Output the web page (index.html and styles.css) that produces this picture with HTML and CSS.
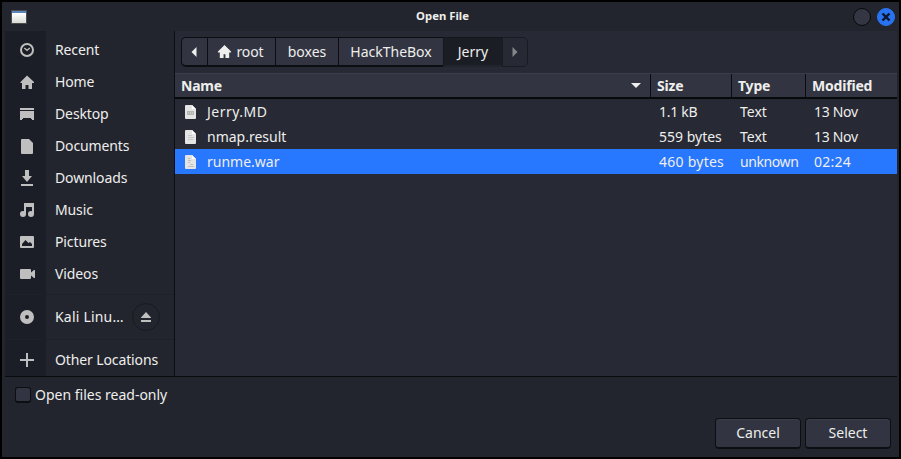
FILE: index.html
```html
<!DOCTYPE html>
<html lang="en">
<head>
<meta charset="utf-8">
<title>Open File</title>
<link rel="stylesheet" href="styles.css">
</head>
<body>
<div class="window">
  <header class="titlebar">
    <span class="app-icon"></span>
    <h1>Open File</h1>
    <div class="controls">
      <span class="ctl"></span>
      <span class="ctl close"><svg width="10" height="10" viewBox="0 0 10 10"><path d="M1.5 1.5l7 7M8.5 1.5l-7 7" stroke="#0d1526" stroke-width="2.4"/></svg></span>
    </div>
  </header>
  <main class="content">
    <nav class="sidebar">
      <ul class="places">
        <li><svg class="ic" viewBox="0 0 16 16"><circle cx="8" cy="8" r="6" fill="none" stroke="currentColor" stroke-width="2"/><path d="M5.3 6L8 8.3 10.8 6" fill="none" stroke="currentColor" stroke-width="1.3"/></svg><span class="label">Recent</span></li>
        <li><svg class="ic" viewBox="0 0 16 16"><path d="M8 1.5L1.5 8v1H3v6h3.5v-4h3v4H13V9h2V8z" fill="currentColor"/></svg><span class="label">Home</span></li>
        <li><svg class="ic" viewBox="0 0 16 16"><path d="M1 2h14v2H1zM1 5h14v9h-2v-1h-1v-1H4v1H3v1H1z" fill="currentColor"/></svg><span class="label">Desktop</span></li>
        <li><svg class="ic" viewBox="0 0 16 16"><path d="M3 1h7l4 4v10q0 1-1 1H3q-1 0-1-1V2q0-1 1-1z" fill="currentColor"/></svg><span class="label">Documents</span></li>
        <li><svg class="ic" viewBox="0 0 16 16"><path d="M6 0h4v6h3l-5 6-5-6h3zM2 14h12v2H2z" fill="currentColor"/></svg><span class="label">Downloads</span></li>
        <li><svg class="ic" viewBox="0 0 16 16"><path d="M5 1h10v11h-2V5H7v7H5z" fill="currentColor"/><circle cx="4" cy="12" r="3" fill="currentColor"/><circle cx="12" cy="12" r="3" fill="currentColor"/></svg><span class="label">Music</span></li>
        <li><svg class="ic" viewBox="0 0 16 16"><path fill-rule="evenodd" d="M2 2h12q1 0 1 1v10q0 1-1 1H2q-1 0-1-1V3q0-1 1-1zM3 12h10V10L11 8 9.5 9 6.5 6 3 10z" fill="currentColor"/></svg><span class="label">Pictures</span></li>
        <li><svg class="ic" viewBox="0 0 16 16"><path d="M2 3h9q1 0 1 1v2.5L15 4h1v8h-1l-3-2.5V12q0 1-1 1H2q-1 0-1-1V4q0-1 1-1z" fill="currentColor"/></svg><span class="label">Videos</span></li>
        <li class="device"><svg class="ic" viewBox="0 0 16 16"><circle cx="8" cy="8" r="4.5" fill="none" stroke="currentColor" stroke-width="5"/></svg><span class="label clip">Kali Linu…</span><span class="eject"><svg width="10" height="10" viewBox="0 0 10 10"><path d="M5 0l5 5.5v.5H0v-.5zM0 8h10v2H0z" fill="currentColor"/></svg></span></li>
        <li class="other"><svg class="ic" viewBox="0 0 16 16"><path d="M7 1h2v6h6v2H9v6H7V9H1V7h6z" fill="currentColor"/></svg><span class="label">Other Locations</span></li>
      </ul>
    </nav>
    <section class="browser">
      <div class="pathbar">
        <span class="crumb back"><svg width="6" height="10" viewBox="0 0 6 10"><path d="M5.5 0v10L.5 5z" fill="currentColor"/></svg></span>
        <span class="crumb root"><svg class="home" width="15" height="15" viewBox="0 0 16 16"><path d="M8 1L1 8v1h2v6h4v-4h2v4h4V9h2V8z" fill="currentColor"/></svg><span>root</span></span>
        <span class="crumb boxes">boxes</span>
        <span class="crumb htb">HackTheBox</span>
        <span class="crumb current">Jerry</span>
        <span class="crumb forward"><svg width="6" height="10" viewBox="0 0 6 10"><path d="M.5 0v10l5-5z" fill="currentColor"/></svg></span>
      </div>
      <div class="row head">
        <span class="name">Name<svg width="10" height="5" viewBox="0 0 10 5"><path d="M0 0h10L5 5z" fill="currentColor"/></svg></span><span>Size</span><span>Type</span><span>Modified</span>
      </div>
      <div class="row">
        <span class="name"><svg width="11" height="14" viewBox="0 0 11 14"><path d="M1 0h6l4 4v9q0 1-1 1H1q-1 0-1-1V1q0-1 1-1z" fill="#e4e4e4"/><path d="M7 0v4h4z" fill="#fff"/><path d="M2 6h7v4H2z" fill="#b4b4b4"/><path d="M3 8h5" stroke="#ddd" stroke-dasharray="1 1"/></svg><span class="wide">Jerry.MD</span></span><span class="tight">1.1 kB</span><span>Text</span><span class="tight">13 Nov</span>
      </div>
      <div class="row">
        <span class="name"><svg width="11" height="14" viewBox="0 0 11 14"><path d="M1 0h6l4 4v9q0 1-1 1H1q-1 0-1-1V1q0-1 1-1z" fill="#e4e4e4"/><path d="M7 0v4h4z" fill="#fff"/><path d="M3 5.5h4M3 7.5h6M3 9.5h5" stroke="#c8c8c8"/></svg>nmap.result</span><span>559 bytes</span><span>Text</span><span class="tight">13 Nov</span>
      </div>
      <div class="row selected">
        <span class="name"><svg width="11" height="14" viewBox="0 0 11 14"><path d="M1 0h6l4 4v9q0 1-1 1H1q-1 0-1-1V1q0-1 1-1z" fill="#e4e4e4"/><path d="M7 0v4h4z" fill="#fff"/><path d="M3 3.5h2M3 5.5h3M3 7.5h2M5 9.5h3M3 11.5h6" stroke="#c0c0c0"/></svg>runme.war</span><span class="loose">460 bytes</span><span class="unknown">unknown</span><span class="loose">02:24</span>
      </div>
    </section>
  </main>
  <footer class="footer">
    <label class="readonly"><span class="box"></span><span>Open files read-only</span></label>
    <div class="actions"><button>Cancel</button><button>Select</button></div>
  </footer>
</div>
</body>
</html>
```
FILE: styles.css
```css
* { box-sizing: border-box; }
body {
  margin: 0;
  background: #000;
  color: #eeeeec;
  font: 14px/20px "Noto Sans", sans-serif;
}
.window {
  width: 901px;
  height: 459px;
  border: 2px solid #000;
  padding: 0 2px 0 3px;
  background: #23252e;
  display: flex;
  flex-direction: column;
}
.titlebar {
  height: 29px;
  flex: none;
  display: grid;
  grid-template-columns: 60px 1fr 60px;
  align-items: center;
}
.app-icon {
  width: 14px;
  height: 12px;
  margin-left: 7px;
  border-top: 2px solid #5b86bd;
  background: linear-gradient(#fff, #d9dcd6);
  box-shadow: 0 0 0 1px #4a4b4a;
}
.titlebar h1 {
  margin: 0;
  padding: 0 17px 2px 0;
  font-size: 11.3px;
  font-weight: 700;
  text-align: center;
}
.controls { display: flex; gap: 6px; justify-content: flex-end; padding-right: 2px; }
.ctl {
  width: 18px;
  height: 18px;
  border: 1px solid #07080a;
  border-radius: 50%;
  background: #343743;
  display: grid;
  place-items: center;
}
.ctl.close { border-color: #2a74ee; background: #2773f1; }
.content { height: 346px; flex: none; display: flex; border-bottom: 1px solid #0a0b0e; }
.sidebar {
  width: 170px;
  border-right: 1px solid #0c0d11;
  background: linear-gradient(90deg, #1b1e26 41px, #23252e 41px);
}
.places { margin: 0; padding: 3px 0 0; list-style: none; }
.places li { height: 32px; display: flex; align-items: center; padding-left: 14px; }
.ic { width: 16px; height: 16px; flex: none; color: #bfbfc0; }
.label { margin-left: 20px; white-space: nowrap; letter-spacing: -.12px; }
.label.clip { letter-spacing: .2px; }
.places .device { height: 45px; margin-top: 4px; border-top: 1px solid #1f2129; }
.places .other { height: 37px; padding-top: 4px; border-top: 1px solid #1f2129; }
.eject {
  width: 28px;
  height: 28px;
  margin-left: auto;
  margin-right: 14px;
  border: 1px solid #181a21;
  border-radius: 50%;
  color: #bfbfc0;
  display: grid;
  place-items: center;
}
.browser { flex: 1; background: #272934; }
.pathbar {
  height: 30px;
  margin: 6px 0 6px 6px;
  display: flex;
}
.crumb {
  border: 1px solid #0d0e12;
  border-right: 0;
  border-bottom-width: 2px;
  background: #323541;
  display: flex;
  align-items: center;
  justify-content: center;
}
.back { width: 26px; padding-right: 2px; border-radius: 5px 0 0 5px; }
.root { width: 68px; gap: 4px; padding-right: 2px; letter-spacing: -.1px; }
.boxes { width: 63px; }
.htb { width: 105px; }
.current { width: 59px; background: #1b1d25; border-color: #15171d; border-bottom-color: #22242d; }
.forward {
  width: 26px;
  border: 1px solid #191b22;
  border-radius: 0 5px 5px 0;
  background: #272934;
  color: #85868b;
}
.row { height: 25px; display: grid; grid-template-columns: 475px 81px 74px 1fr; align-items: center; }
.row > span { padding-left: 9px; white-space: nowrap; }
.row .name { padding-left: 10px; display: flex; align-items: center; gap: 11px; }
.wide { letter-spacing: .5px; }
.loose { letter-spacing: .25px; }
.tight { letter-spacing: -.3px; }
.unknown { letter-spacing: -.4px; }
.head {
  height: 26px;
  border-top: 1px solid #3b3e4a;
  border-bottom: 2px solid #08090b;
  background: #323541;
  font-weight: 700;
  letter-spacing: -.2px;
}
.head > span { height: 23px; line-height: 23px; }
.head > span + span { border-left: 1px solid #0b0c0f; padding-left: 6px; }
.row.head .name { padding: 0 9px 0 6px; justify-content: space-between; }
.selected { background: #2777ff; }
.footer { flex: 1; display: flex; flex-direction: column; justify-content: space-between; padding: 8px 6px 8px 10px; }
.readonly { display: flex; align-items: center; gap: 4px; }
.box {
  width: 16px;
  height: 16px;
  border: 1px solid #0d0e12;
  border-bottom-width: 2px;
  border-radius: 3px;
  background: #323541;
}
.actions { display: flex; justify-content: flex-end; gap: 4px; }
button {
  width: 86px;
  height: 31px;
  padding: 0;
  border: 1px solid #0d0e12;
  border-bottom-width: 2px;
  border-radius: 4px;
  background: #323541;
  box-shadow: inset 0 1px #3b3e4a;
  color: #eeeeec;
  font: inherit;
}
```
